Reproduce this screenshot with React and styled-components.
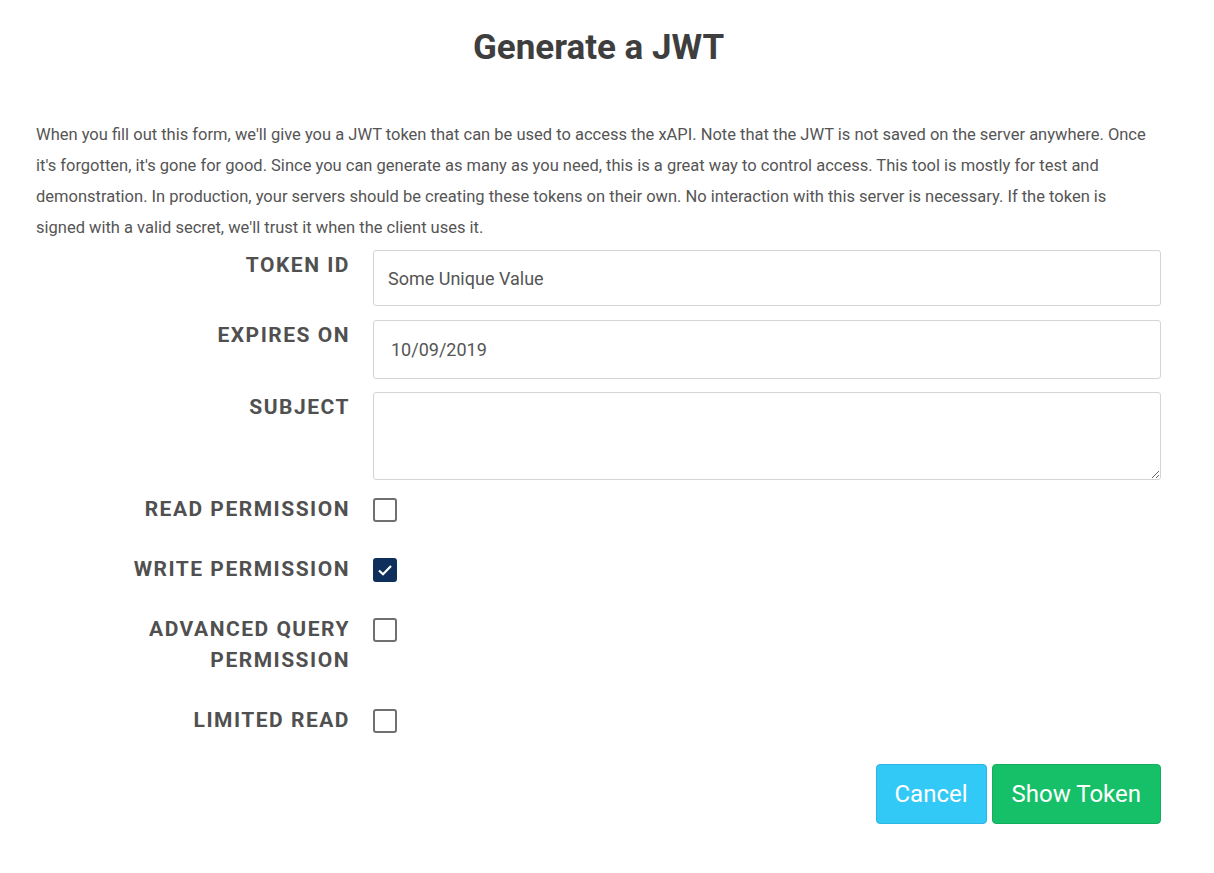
import styled, { createGlobalStyle } from "styled-components";

const GlobalStyle = createGlobalStyle`
  body {
    margin: 0;
    background: #ffffff;
    font-family: Roboto, "Liberation Sans", sans-serif;
    color: #555;
  }
`;

const Page = styled.div`
  width: 1125px;
  margin-left: 36px;
  padding-top: 26px;
`;

const Title = styled.h1`
  margin: 0 0 50px;
  text-align: center;
  font-size: 35px;
  line-height: 43px;
  font-weight: 700;
  color: #3e3e3e;
`;

const Intro = styled.p`
  margin: 0 0 7px;
  font-size: 16.5px;
  line-height: 31px;
  color: #555;
`;

const Row = styled.div`
  display: grid;
  grid-template-columns: 314px 788px;
  column-gap: 23px;
  align-items: start;
  margin-bottom: ${(p) => p.$gap || 14}px;
`;

const Label = styled.label`
  text-align: right;
  font-size: 21px;
  line-height: 31px;
  font-weight: 700;
  letter-spacing: 1.5px;
  text-transform: uppercase;
  color: #505050;
`;

const Input = styled.input`
  box-sizing: border-box;
  width: 100%;
  height: ${(p) => p.$h || 56}px;
  padding: 0 14px 0 ${(p) => p.$pl || 14}px;
  border: 1px solid #d4d4d4;
  border-radius: 3px;
  font-family: inherit;
  font-size: 18px;
  color: #555;
  outline: none;
`;

const TextArea = styled.textarea`
  box-sizing: border-box;
  width: 100%;
  height: 88px;
  padding: 10px 14px;
  border: 1px solid #d4d4d4;
  border-radius: 3px;
  font-family: inherit;
  font-size: 18px;
  color: #555;
  outline: none;
`;

const Box = styled.span`
  box-sizing: border-box;
  display: flex;
  align-items: center;
  justify-content: center;
  width: 24px;
  height: 24px;
  margin-top: 4px;
  border: 2px solid ${(p) => (p.$checked ? "#0e2f5c" : "#707070")};
  border-radius: 3px;
  background: ${(p) => (p.$checked ? "#0e2f5c" : "#fff")};
`;

const Actions = styled.div`
  display: flex;
  justify-content: flex-end;
  gap: 5px;
  width: 1125px;
  margin-top: 28px;
`;

const Button = styled.button`
  height: 60px;
  padding: 0 ${(p) => p.$px || 20}px;
  border: 1px solid ${(p) => p.$border};
  border-radius: 4px;
  background: ${(p) => p.$bg};
  color: #fff;
  font-family: inherit;
  font-size: 24px;
`;

const Check = ({ checked }) => (
  <Box $checked={checked}>
    {checked && (
      <svg width="16" height="16" viewBox="0 0 16 16" style={{ flex: "none" }}>
        <path d="M2 8.5l4 3.8L14 4" fill="none" stroke="#fff" strokeWidth="2.2" />
      </svg>
    )}
  </Box>
);

export default function App() {
  return (
    <>
      <GlobalStyle />
      <Page>
        <Title>Generate a JWT</Title>
        <Intro>
          When you fill out this form, we'll give you a JWT token that can be used to access the xAPI. Note that the JWT is not
          saved on the server anywhere. Once
          <br />
          it's forgotten, it's gone for good. Since you can generate as many as you need, this is a great way to control
          access. This tool is mostly for test and
          <br />
          demonstration. In production, your servers should be creating these tokens on their own. No interaction with this
          server is necessary. If the token is
          <br />
          signed with a valid secret, we'll trust it when the client uses it.
        </Intro>
        <Row>
          <Label>Token ID</Label>
          <Input defaultValue="Some Unique Value" />
        </Row>
        <Row $gap={13}>
          <Label>Expires On</Label>
          <Input $h={59} $pl={17} defaultValue="10/09/2019" />
        </Row>
        <Row>
          <Label>Subject</Label>
          <TextArea />
        </Row>
        <Row $gap={29}>
          <Label>Read Permission</Label>
          <Check />
        </Row>
        <Row $gap={29}>
          <Label>Write Permission</Label>
          <Check checked />
        </Row>
        <Row $gap={29}>
          <Label>
            Advanced Query
            <br />
            Permission
          </Label>
          <Check />
        </Row>
        <Row $gap={0}>
          <Label>Limited Read</Label>
          <Check />
        </Row>
        <Actions>
          <Button $bg="#33c9f7" $border="#2bb5e0" $px={18}>Cancel</Button>
          <Button $bg="#16c069" $border="#14ad5e" $px={19}>Show Token</Button>
        </Actions>
      </Page>
    </>
  );
}
